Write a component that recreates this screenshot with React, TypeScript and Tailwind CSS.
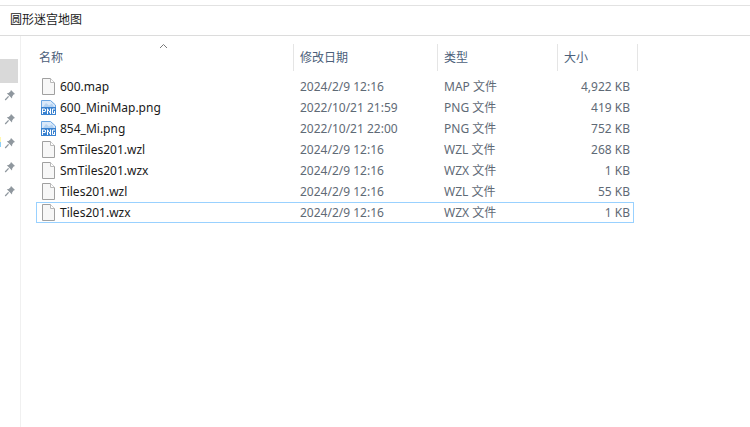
import React from 'react';

const files = [
  { name: '600.map', date: '2024/2/9 12:16', type: 'MAP 文件', size: '4,922 KB', png: false },
  { name: '600_MiniMap.png', date: '2022/10/21 21:59', type: 'PNG 文件', size: '419 KB', png: true },
  { name: '854_Mi.png', date: '2022/10/21 22:00', type: 'PNG 文件', size: '752 KB', png: true },
  { name: 'SmTiles201.wzl', date: '2024/2/9 12:16', type: 'WZL 文件', size: '268 KB', png: false },
  { name: 'SmTiles201.wzx', date: '2024/2/9 12:16', type: 'WZX 文件', size: '1 KB', png: false },
  { name: 'Tiles201.wzl', date: '2024/2/9 12:16', type: 'WZL 文件', size: '55 KB', png: false },
  { name: 'Tiles201.wzx', date: '2024/2/9 12:16', type: 'WZX 文件', size: '1 KB', png: false, selected: true },
];

const PinIcon = () => (
  <svg width="12" height="12" viewBox="0 0 12 12">
    <path d="M7 1 L11 5 L9.6 5.6 L8.2 7.6 L8 9.4 L2.8 4.2 L4.6 4 L6.4 2.6 Z" fill="#8f979e" />
    <path d="M4.6 7.4 L1.2 11" stroke="#8f979e" strokeWidth="1.3" />
  </svg>
);

const FileIcon = () => (
  <svg width="13" height="17" viewBox="0 0 13 17">
    <path d="M.5 .5 H8.5 L12.5 4.5 V16.5 H.5 Z" fill="#f7f7f7" stroke="#a0a0a0" />
    <path d="M8.5 .5 V4.5 H12.5" fill="#fff" stroke="#b8b8b8" />
  </svg>
);

const PngIcon = () => (
  <svg width="15" height="15" viewBox="0 0 15 15">
    <path d="M.5 .5 H9.5 L14.5 5 V14.5 H.5 Z" fill="#dbe9f9" stroke="#6aa5e2" />
    <path d="M2 7 L5 3 L8 5.5 L11 3.5 L13 7 Z" fill="#b4d2f1" />
    <rect x="0" y="7" width="15" height="8" fill="#3a82d0" />
    <rect x="1" y="8.5" width="1" height="5.5" fill="#fff" />
    <rect x="2" y="8.5" width="2" height="1" fill="#fff" />
    <rect x="2" y="11" width="2" height="1" fill="#fff" />
    <rect x="4" y="9" width="1" height="2.5" fill="#fff" />
    <rect x="6" y="8.5" width="1" height="5.5" fill="#fff" />
    <rect x="9" y="8.5" width="1" height="5.5" fill="#fff" />
    <rect x="7" y="9.5" width="1" height="1.5" fill="#fff" />
    <rect x="8" y="11" width="1" height="1.5" fill="#fff" />
    <rect x="11" y="9" width="1" height="4.5" fill="#fff" />
    <rect x="11.5" y="8.5" width="2.5" height="1" fill="#fff" />
    <rect x="11.5" y="13" width="2.5" height="1" fill="#fff" />
    <rect x="13" y="11" width="1" height="2.5" fill="#fff" />
  </svg>
);

const App = () => {
  return (
    <div
      className="w-[750px] h-[427px] bg-white overflow-hidden flex flex-col text-[12px]"
      style={{ fontFamily: '"Noto Sans", "Noto Sans CJK SC", sans-serif' }}
    >
      <div className="h-[31px] mt-[5px] pb-[2px] flex items-center pl-[10px] text-[#1a1a1a] border-t border-b border-t-[#e2e2e2] border-b-[#dcdcdc] shrink-0">
        圆形迷宫地图
      </div>

      <div className="flex flex-1">
        {/* left nav strip */}
        <div className="relative w-[21px] border-r border-[#f0f0f0] pt-[23px] shrink-0">
          <div className="w-[18px] h-[24px] bg-[#d9d9d9]" />
          {/* clipped tree icons at the window edge */}
          <div className="absolute left-0 top-[101px] w-[1px] h-[5px] bg-[#fff7b0]" />
          <div className="absolute left-0 top-[106px] w-[1px] h-[5px] bg-[#8fd0f5]" />
          <div className="flex flex-col items-center gap-[12px] pt-[6px] pr-[1px]">
            <PinIcon />
            <PinIcon />
            <PinIcon />
            <PinIcon />
            <PinIcon />
          </div>
        </div>

        <div className="flex-1 pl-[15px]">
          {/* column headers */}
          <div className="relative flex h-[27px] mt-[8px] text-[#4c607a]">
            <svg className="absolute left-[123px] -top-[1px]" width="9" height="6" viewBox="0 0 9 6">
              <path d="M1 5 L4.5 1.5 L8 5" fill="none" stroke="#7a7a7a" />
            </svg>
            <div className="w-[258px] pl-[3px] flex items-center border-r border-[#e5e5e5]">名称</div>
            <div className="w-[144px] pl-[6px] flex items-center border-r border-[#e5e5e5]">修改日期</div>
            <div className="w-[120px] pl-[6px] flex items-center border-r border-[#e5e5e5]">类型</div>
            <div className="w-[80px] pl-[6px] flex items-center border-r border-[#e5e5e5]">大小</div>
          </div>

          {/* files */}
          <div className="flex flex-col mt-[5px] w-[598px]">
            {files.map((f) => (
              <div
                key={f.name}
                className={`flex items-center h-[21px] ${f.selected ? 'border border-[#99d1ff]' : 'border border-transparent'}`}
              >
                <div className="w-[18px] ml-[2px] flex justify-center shrink-0">
                  {f.png ? <PngIcon /> : <FileIcon />}
                </div>
                <div className="w-[243px] pl-[3px] text-[#1a1a1a] whitespace-nowrap">{f.name}</div>
                <div className="w-[144px] text-[#5f6a76] whitespace-nowrap">{f.date}</div>
                <div className="w-[108px] text-[#5f6a76] whitespace-nowrap">{f.type}</div>
                <div className="flex-1 text-right pr-[3px] text-[#5f6a76] whitespace-nowrap">{f.size}</div>
              </div>
            ))}
          </div>
        </div>
      </div>
    </div>
  );
};

export default App;
